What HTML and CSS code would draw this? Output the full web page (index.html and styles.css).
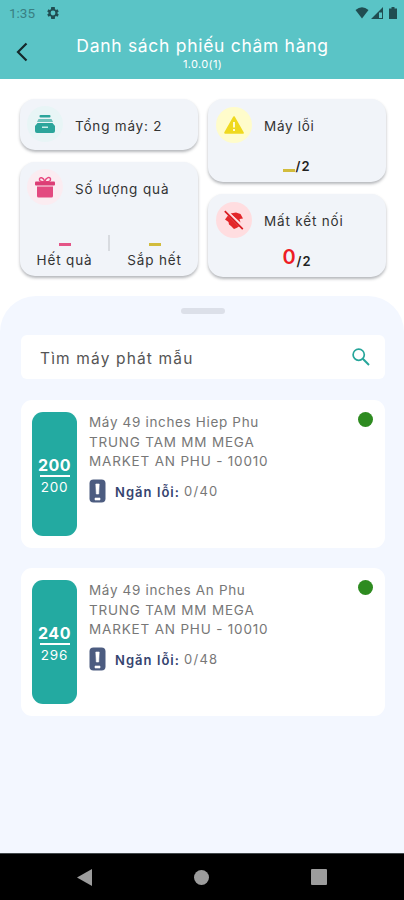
FILE: index.html
```html
<!DOCTYPE html>
<html lang="vi">
<head>
<meta charset="utf-8">
<title>Danh sách phiếu châm hàng</title>
<link rel="stylesheet" href="styles.css">
</head>
<body>
<header class="top">
  <div class="status">
    <span class="clock">1:35</span>
    <svg class="gear" width="12" height="12" viewBox="2 2 20 20"><path fill-rule="evenodd" d="M19.400 13a7.500 7.500 0 0 0 0-2l2.100-1.600-2-3.500-2.500 1a7.500 7.500 0 0 0-1.700-1L15 2.200H9l-.4 3.700a7.500 7.500 0 0 0-1.700 1l-2.500-1-2 3.500L4.600 11a7.500 7.500 0 0 0 0 2l-2.200 1.600 2 3.500 2.500-1a7.500 7.500 0 0 0 1.700 1l.4 3.700h6l.4-3.700a7.500 7.500 0 0 0 1.700-1l2.500 1 2-3.500zM12 16a4 4 0 1 1 0-8 4 4 0 0 1 0 8z"/></svg>
    <span class="fill"></span>
    <svg width="14" height="12" viewBox="0 0 14 12"><path d="M.5 3Q7-2.500 13.500 3L7 11.500z"/></svg>
    <svg class="signal" width="12" height="12" viewBox="0 0 12 12"><path fill-rule="evenodd" d="M0 12 12 0v12zM8 5.500V11h3V5.500z"/></svg>
    <svg class="battery" width="8" height="12" viewBox="0 0 8 12"><path d="M2.500 0h3v1.500H8V12H0V1.500h2.500z"/></svg>
  </div>
  <div class="bar">
    <svg class="back" width="12" height="20" viewBox="0 0 12 20"><path d="M10.500 1.500 2 10l8.500 8.500"/></svg>
    <div class="titles">
      <h1>Danh sách phiếu châm hàng</h1>
      <p>1.0.0(1)</p>
    </div>
  </div>
</header>

<main>
  <section class="stats">
    <div class="col">
      <div class="card total">
        <div class="head">
          <span class="ico mint"><svg width="20" height="18" viewBox="0 0 20 18" fill="#2ba59b"><rect x="4.500" y="0" width="11" height="2.500" rx="1"/><path d="M3.500 4h13l1.500 3H2z" opacity=".65"/><path d="M2.500 8h15L20 11v5a2 2 0 0 1-2 2H2a2 2 0 0 1-2-2v-5z"/><path d="M7 11.500h6v1.500H7z" fill="#c9eeea"/></svg></span>
          <span class="label l-total">Tổng máy: 2</span>
        </div>
      </div>
      <div class="card gifts">
        <div class="head">
          <span class="ico rose"><svg width="20" height="22" viewBox="0 0 20 22"><path d="M9.500 5.500C6 6 4 5 4.500 3S8 1 9.800 5.500C11 1 15 .5 15.500 3S13 6 10 5.500" fill="none" stroke="#e8487f" stroke-width="1.500"/><rect x="0" y="5.500" width="20" height="4" rx="1" fill="#dc3d75"/><path d="M2 10.500h16V20a1.500 1.500 0 0 1-1.500 1.500h-13A1.500 1.500 0 0 1 2 20z" fill="#e34a80"/></svg></span>
          <span class="label l-gifts">Số lượng quà</span>
        </div>
        <div class="split">
          <div class="half"><i class="dash pink"></i><span>Hết quà</span></div>
          <i class="divider"></i>
          <div class="half"><i class="dash gold"></i><span>Sắp hết</span></div>
        </div>
      </div>
    </div>
    <div class="col">
      <div class="card side">
        <div class="head">
          <span class="ico lemon"><svg width="20" height="18" viewBox="0 0 20 18"><path d="M10 1.200 18.800 16.800H1.200z" fill="#efd91f" stroke="#efd91f" stroke-width="2" stroke-linejoin="round"/><path d="M10 6v5.500M10 13v2" stroke="#fffbd0" stroke-width="2"/></svg></span>
          <span class="label l-err">Máy lỗi</span>
        </div>
        <div class="value"><i class="dash gold low"></i><b>/2</b></div>
      </div>
      <div class="card side">
        <div class="head">
          <span class="ico blush"><svg width="20" height="20" viewBox="0 0 20 20"><path d="M4 5.500 15 16.500l-2.500 1.500-2.500 1-3-3L5 14.500 4.500 12 1 9.500zM6.500 3.500 12 2.500l4.500 1.500 2.500 4.500-3.500.5 1 3.500z" fill="#e3262a"/><path d="M2 .2 20 18.200" stroke="#ffdde0" stroke-width="2"/><path d="m.8 1.200 18 18" stroke="#d9191f" stroke-width="1.700"/></svg></span>
          <span class="label l-lost">Mất kết nối</span>
        </div>
        <div class="value"><em>0</em><span class="two">/2</span></div>
      </div>
    </div>
  </section>

  <section class="sheet">
    <i class="handle"></i>
    <div class="search">
      <span>Tìm máy phát mẫu</span>
      <svg width="18" height="18" viewBox="0 0 18 18" fill="none" stroke="#26a59a"><circle cx="6.700" cy="6.700" r="5.600" stroke-width="1.700"/><path d="m10.800 10.800 6.200 6.200" stroke-width="2"/></svg>
    </div>
    <article class="machine">
      <div class="pill"><b>200</b><i></i><span>200</span></div>
      <div class="info">
        <p class="name">Máy 49 inches Hiep Phu</p>
        <p class="site">TRUNG TAM MM MEGA</p>
        <p class="area">MARKET AN PHU - 10010</p>
        <div class="fault">
          <svg width="17" height="24" viewBox="0 0 17 24"><rect x=".5" y=".5" width="16" height="23" rx="4" fill="#4c5c80"/><path d="M6.800 5h3.400l-.5 10H7.300zM6 19h5v2H6z" fill="#fff" stroke="#fff" stroke-width=".6"/></svg>
          <b>Ngăn lỗi:</b><span>0/40</span>
        </div>
      </div>
      <i class="dot"></i>
    </article>
    <article class="machine">
      <div class="pill"><b>240</b><i></i><span>296</span></div>
      <div class="info">
        <p class="name">Máy 49 inches An Phu</p>
        <p class="site">TRUNG TAM MM MEGA</p>
        <p class="area">MARKET AN PHU - 10010</p>
        <div class="fault">
          <svg width="17" height="24" viewBox="0 0 17 24"><rect x=".5" y=".5" width="16" height="23" rx="4" fill="#4c5c80"/><path d="M6.800 5h3.400l-.5 10H7.300zM6 19h5v2H6z" fill="#fff" stroke="#fff" stroke-width=".6"/></svg>
          <b>Ngăn lỗi:</b><span>0/48</span>
        </div>
      </div>
      <i class="dot"></i>
    </article>
  </section>
</main>

<nav class="nav">
  <svg width="15" height="17" viewBox="0 0 15 17"><path d="M15 0v17L0 8.500z"/></svg>
  <svg width="15" height="15" viewBox="0 0 15 15"><circle cx="7.500" cy="7.500" r="7.500"/></svg>
  <svg width="16" height="16" viewBox="0 0 16 16"><rect width="16" height="16" rx="1"/></svg>
</nav>
</body>
</html>
```
FILE: styles.css
```css
* { box-sizing: border-box; }
body {
  margin: 0;
  width: 404px;
  height: 900px;
  display: flex;
  flex-direction: column;
  overflow: hidden;
  background: #fff;
  font-family: Inter, "Noto Sans", sans-serif;
  color: #333;
}
h1, p { margin: 0; font-weight: 400; white-space: nowrap; }
svg { display: block; flex: none; }
span, b { white-space: nowrap; }

.top { height: 79px; background: #5ac4c6; color: #fff; flex: none; }
.status { height: 25px; display: flex; align-items: center; padding: 0 7px 0 9px; color: #397f83; fill: #204d51; }
.clock { font-family: Roboto, sans-serif; font-size: 13.5px; width: 38px; }
.fill { flex: 1; }
.signal { margin-left: 2px; }
.battery { margin-left: 6px; }
.bar { display: flex; align-items: flex-start; height: 54px; padding-left: 16px; }
.back { margin-top: 17px; fill: none; stroke: #15292b; stroke-width: 2.200; }
.titles { width: 349px; text-align: center; margin-top: 9px; }
.titles h1 { font-size: 17.500px; line-height: 24px; letter-spacing: .7px; }
.titles p { font-size: 11px; line-height: 13px; letter-spacing: .35px; }

main { flex: 1; display: flex; flex-direction: column; }
.stats { display: flex; gap: 10px; padding: 20px 18px 19px 20px; }
.col { width: 178px; display: flex; flex-direction: column; gap: 12px; }
.card { background: #f1f4f9; border-radius: 15px; box-shadow: 0 2px 3px rgba(60, 65, 75, .38); }
.total { height: 51px; }
.gifts { height: 114px; }
.side { height: 83px; }
.head { display: flex; align-items: center; padding: 8px 0 0 8px; }
.col:first-child .head { padding: 7px 0 0 7px; }
.ico { width: 36px; height: 36px; border-radius: 50%; display: grid; place-items: center; flex: none; }
.mint { background: #e8f5f6; }
.rose { background: #fbecf1; }
.lemon { background: #fffccb; }
.blush { background: #ffdde0; }
.label { margin-left: 12px; padding-top: 3px; font-size: 13.500px; line-height: 18px; }
.side .label { padding-top: 2px; }
.l-total { letter-spacing: .8px; }
.l-gifts { letter-spacing: .9px; }
.l-err { letter-spacing: .7px; }
.l-lost { letter-spacing: .82px; }
.split { display: flex; justify-content: space-between; padding: 30px 15px 0 16px; font-size: 13.500px; line-height: 18px; letter-spacing: .85px; }
.half { width: 57px; display: flex; flex-direction: column; align-items: center; gap: 5px; padding-top: 8px; }
.dash { display: block; width: 12px; height: 3px; }
.pink { background: #e45587; }
.gold { background: #d2bc3d; }
.divider { width: 2px; height: 16px; margin-right: 1px; background: #d8dbe0; }
.value { display: flex; justify-content: center; align-items: baseline; height: 30px; padding-top: 13px; font-size: 13px; line-height: 20px; color: #222; }
.value b { font-weight: 600; letter-spacing: 1px; }
.low { align-self: flex-start; margin-top: 13px; }
.value em { position: relative; top: -2px; color: #ee1c25; font-style: normal; font-weight: 600; font-size: 20px; line-height: 16px; }
.two { font-weight: 600; letter-spacing: 1px; margin-left: 1px; }

.sheet { flex: 1; background: #f3f7ff; border-radius: 36px 36px 0 0; padding: 12px 19px 0 21px; }
.handle { display: block; width: 44px; height: 6px; margin: 0 auto; border-radius: 3px; background: #dce0e9; }
.search { height: 44px; margin: 21px 0 21px; background: #fff; border-radius: 6px; display: flex; align-items: center; justify-content: space-between; padding: 0 15px 0 19px; font-size: 15.500px; letter-spacing: 1.150px; color: #555; }
.search span { padding-top: 2px; }
.machine { height: 148px; margin-bottom: 20px; background: #fff; border-radius: 11px; display: flex; padding: 12px 12px 0 11px; }
.pill { width: 45px; height: 124px; background: #23aaa1; border-radius: 11px; color: #fff; display: flex; flex-direction: column; align-items: center; padding-top: 43px; flex: none; }
.pill b { font-size: 16px; line-height: 20px; letter-spacing: .5px; }
.pill i { width: 30px; height: 2px; background: #fff; }
.pill span { font-size: 13.500px; line-height: 21px; letter-spacing: .8px; }
.info { flex: 1; margin-left: 12px; color: #777; font-size: 13.500px; line-height: 19.700px; padding-top: 1px; }
.name { letter-spacing: .66px; }
.site { letter-spacing: .8px; }
.area { letter-spacing: .82px; }
.fault { display: flex; align-items: center; height: 24px; margin-top: 7px; font-size: 13px; }
.fault b { margin: 3px 4px 0 9px; color: #35446f; font-weight: 600; letter-spacing: 1.050px; }
.fault span { letter-spacing: 1.250px; padding-top: 2px; }
.dot { width: 15px; height: 15px; border-radius: 50%; background: #2e8b20; flex: none; }

.nav { height: 47px; flex: none; background: #000; border-top: 1px solid #42484b; display: flex; align-items: center; justify-content: space-between; padding: 0 77px 0 77px; fill: #9c9c9c; }
```
